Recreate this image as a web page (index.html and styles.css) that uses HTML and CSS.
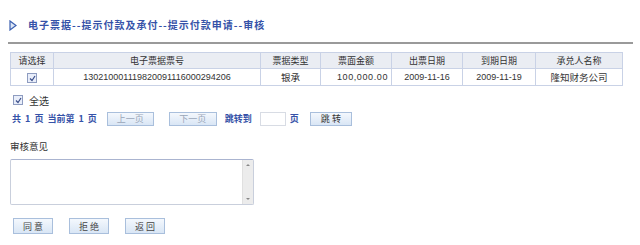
FILE: index.html
```html
<!DOCTYPE html>
<html lang="zh">
<head>
<meta charset="utf-8">
<link rel="stylesheet" href="styles.css">
</head>
<body>
<div class="page">
  <div class="title">
    <svg class="tri" width="8" height="11" viewBox="0 0 8 11"><path d="M1 1 L7 5.5 L1 10 Z" fill="#dde6f5" stroke="#3b5fb0" stroke-width="1.2"/></svg>
    <span>电子票据--提示付款及承付--提示付款申请--审核</span>
  </div>
  <div class="rule"></div>
  <table class="grid">
    <colgroup>
      <col class="c1"><col class="c2"><col class="c3"><col class="c4"><col class="c5"><col class="c6"><col class="c7">
    </colgroup>
    <thead>
      <tr><th>请选择</th><th>电子票据票号</th><th>票据类型</th><th>票面金额</th><th>出票日期</th><th>到期日期</th><th>承兑人名称</th></tr>
    </thead>
    <tbody>
      <tr>
        <td><span class="chk"><svg width="7" height="7" viewBox="0 0 7 7"><path d="M1 3.5 L3 5.5 L6 1" fill="none" stroke="#3b4f8a" stroke-width="1.2"/></svg></span></td>
        <td class="num">130210001119820091116000294206</td>
        <td class="cn">银承</td>
        <td class="amt">100,000.00</td>
        <td class="num">2009-11-16</td>
        <td class="num">2009-11-19</td>
        <td class="cn">隆知财务公司</td>
      </tr>
    </tbody>
  </table>
  <div class="selall">
    <span class="chk"><svg width="7" height="7" viewBox="0 0 7 7"><path d="M1 3.5 L3 5.5 L6 1" fill="none" stroke="#3b4f8a" stroke-width="1.2"/></svg></span>
    <span>全选</span>
  </div>
  <div class="pager">
    <span class="ptext pinfo">共 1 页 当前第 1 页</span>
    <span class="btn dis b-prev">上一页</span>
    <span class="btn dis b-next">下一页</span>
    <span class="ptext">跳转到</span>
    <span class="jump"></span>
    <span class="ptext">页</span>
    <span class="btn b-go">跳 转</span>
  </div>
  <div class="label">审核意见</div>
  <div class="area">
    <div class="sb"><span class="up"></span><span class="down"></span></div>
  </div>
  <div class="actions">
    <span class="btn act">同 意</span>
    <span class="btn act">拒 绝</span>
    <span class="btn act">返 回</span>
  </div>
</div>
</body>
</html>
```
FILE: styles.css
```css
html, body { margin: 0; padding: 0; background: #fff; }
body { font-family: "Noto Sans CJK SC", "Liberation Sans", sans-serif; color: #333; width: 640px; height: 245px; overflow: hidden; }
.page { padding: 0 8px 0 8px; }
.title { display: flex; align-items: center; height: 12px; margin-top: 19px; }
.tri { margin-left: 1px; margin-right: 11px; }
.title span { font-size: 10px; font-weight: bold; color: #3552a8; letter-spacing: 1px; line-height: 12px; }
.rule { height: 2px; background: #9a9a9a; margin-top: 11px; width: 625px; }
.grid { border-collapse: collapse; margin: 8px 0 0 2px; table-layout: fixed; width: 612px; }
.c1 { width: 43px; } .c2 { width: 207px; } .c3 { width: 60px; } .c4 { width: 71px; }
.c5 { width: 71px; } .c6 { width: 73px; } .c7 { width: 87px; }
.grid th, .grid td { border: 1px solid #c9d2e6; padding: 0; text-align: center; font-size: 9px; line-height: 15px; height: 15px; }
.grid th { background: #eaedf3; font-weight: normal; color: #333; }
.grid td { height: 16px; }
.grid .num { font-family: "Liberation Sans", sans-serif; font-size: 9px; color: #333; }
.grid .cn { font-size: 9.5px; }
.grid .amt { text-align: right; padding-right: 3px; font-family: "Liberation Sans", sans-serif; letter-spacing: 0.6px; }
.chk { display: inline-flex; align-items: center; justify-content: center; width: 8px; height: 8px; border: 1px solid #8e9cc0; background: #e9eefa; vertical-align: middle; }
.selall { display: flex; align-items: center; gap: 6px; margin: 8px 0 0 5px; font-size: 10px; height: 12px; }
.pager { display: flex; align-items: center; margin-top: 6px; height: 13px; font-size: 9px; }
.ptext { color: #3552a8; font-weight: bold; font-size: 9px; }
.pinfo { margin-left: 4px; word-spacing: 2px; }
.btn { display: inline-flex; align-items: center; justify-content: center; height: 12px; border: 1px solid #a9bfdc; background: linear-gradient(#f4f8fd, #d9e6f5); font-size: 9px; color: #333; box-sizing: content-box; }
.btn.dis { color: #9aa6b8; }
.b-prev { width: 45px; margin-left: 10px; }
.b-next { width: 46px; margin-left: 15px; margin-right: 8px; }
.jump { display: inline-block; width: 24px; height: 12px; border: 1px solid #d8dce4; margin: 0 4px 0 8px; }
.b-go { width: 40px; margin-left: 11px; }
.label { font-size: 9.5px; margin: 15px 0 0 2px; height: 12px; line-height: 12px; color: #333; }
.area { width: 242px; height: 44px; border: 1px solid #c9cfdc; border-top-color: #aab4d0; margin: 7px 0 0 2px; display: flex; justify-content: flex-end; border-radius: 2px; }
.sb { width: 11px; height: 44px; background: #ececec; border-left: 1px solid #e0e0e0; display: flex; flex-direction: column; justify-content: space-between; align-items: center; padding: 4px 0; box-sizing: border-box; }
.up, .down { width: 0; height: 0; border-left: 2px solid transparent; border-right: 2px solid transparent; }
.up { border-bottom: 2px solid #888; }
.down { border-top: 2px solid #888; }
.actions { display: flex; gap: 16px; margin: 13px 0 0 5px; }
.btn.act { width: 38px; height: 14px; color: #444; }
```
